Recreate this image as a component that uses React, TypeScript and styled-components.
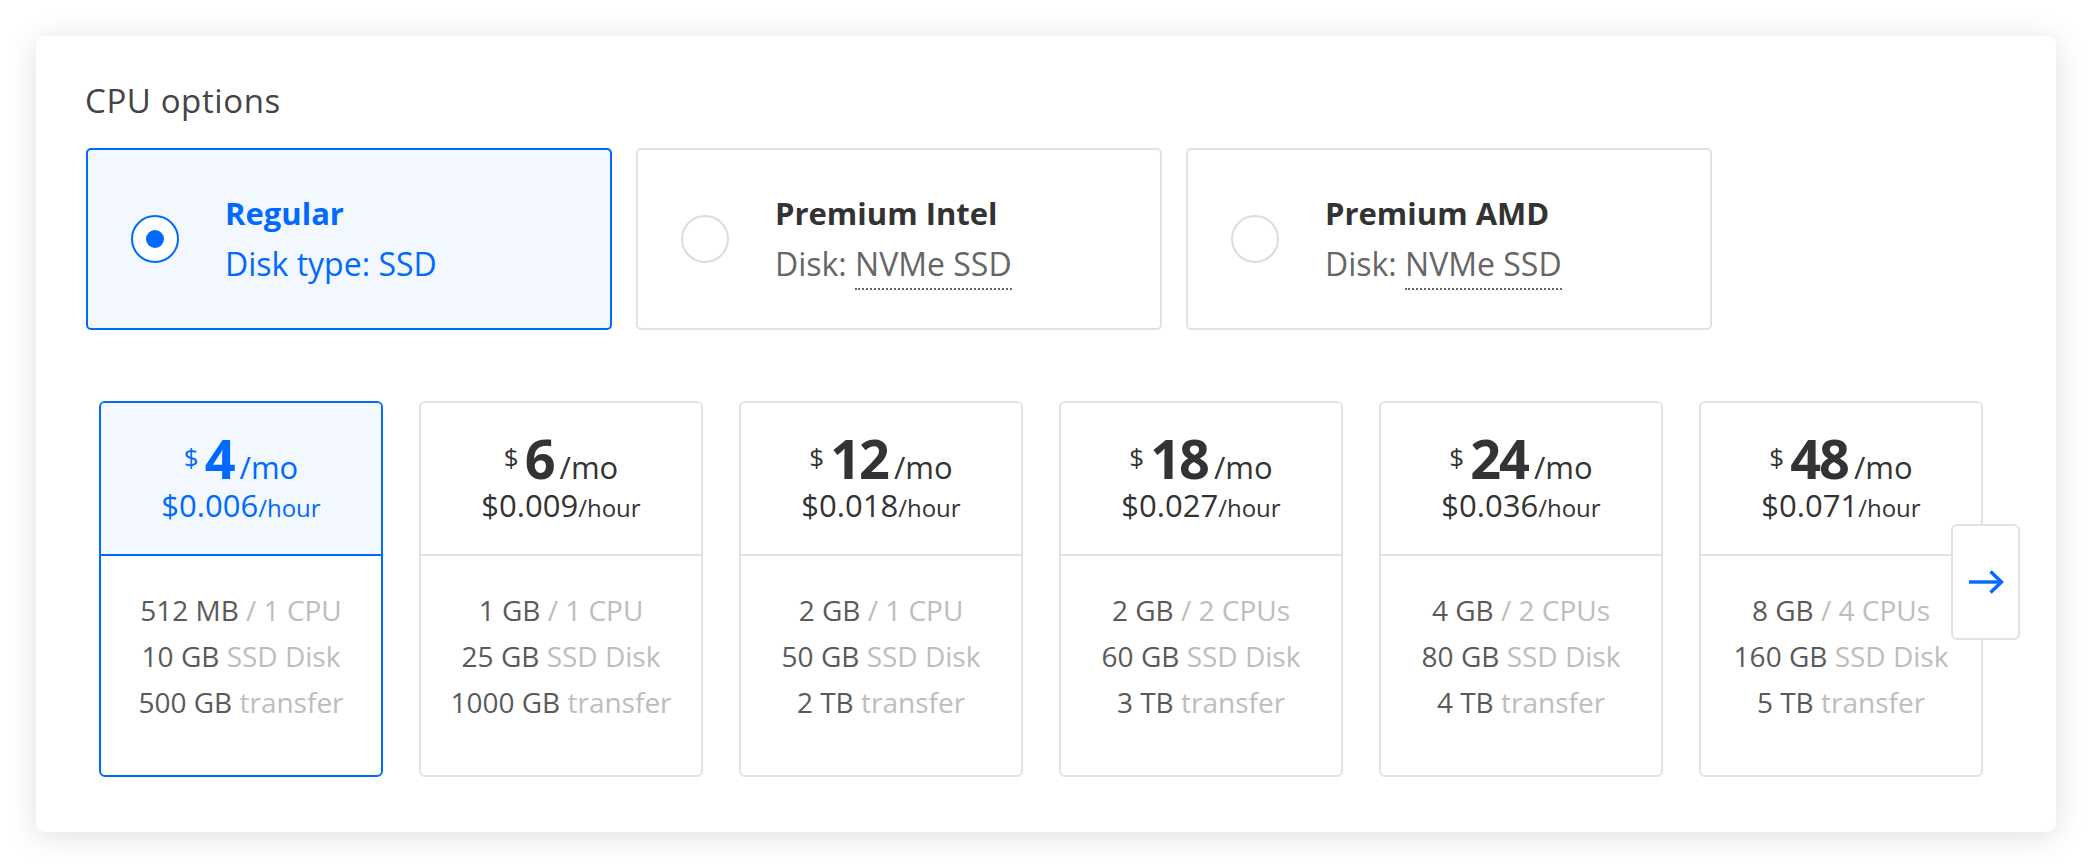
import React from "react";
import styled, { createGlobalStyle } from "styled-components";

const Global = createGlobalStyle`
  html, body { margin: 0; padding: 0; background: #ffffff; }
  body { font-family: "Open Sans", "Liberation Sans", sans-serif; color: #333; }
  * { box-sizing: border-box; }
`;

const BLUE = "#0069ff";
const SEL_BG = "#f3f8ff";
const LINE = "#e2e2e2";

const Page = styled.div`
  padding: 36px;
  width: 2092px;
`;

const Panel = styled.section`
  width: 2020px;
  height: 796px;
  background: #fff;
  border-radius: 9px;
  box-shadow: 0 4px 30px rgba(0, 0, 0, 0.13);
  padding: 45px 0 0 0;
`;

const Head = styled.div`
  padding: 0 49px;
`;

const Title = styled.h2`
  margin: 0;
  font-size: 33px;
  line-height: 40px;
  font-weight: 500;
  letter-spacing: 0.6px;
  color: #444;
`;

const OptionRow = styled.div`
  display: flex;
  gap: 24px;
  margin-top: 27px;
  margin-left: 1px;
`;

const Option = styled.div<{ $active?: boolean }>`
  width: 526px;
  height: 182px;
  border: 2px solid ${(p) => (p.$active ? BLUE : LINE)};
  background: ${(p) => (p.$active ? SEL_BG : "#fff")};
  border-radius: 5px;
  display: flex;
  align-items: center;
  padding-left: 43px;
  gap: 46px;
`;

const Radio = styled.span<{ $active?: boolean }>`
  width: 48px;
  height: 48px;
  flex: none;
  border-radius: 50%;
  border: 2px solid ${(p) => (p.$active ? BLUE : "#dcdcdc")};
  background: #fff;
  display: flex;
  align-items: center;
  justify-content: center;
  &::after {
    content: "";
    display: ${(p) => (p.$active ? "block" : "none")};
    width: 18px;
    height: 18px;
    border-radius: 50%;
    background: ${BLUE};
  }
`;

const OptionText = styled.div`
  display: flex;
  flex-direction: column;
  gap: 11px;
  margin-top: -2px;
`;

const OptionName = styled.div<{ $active?: boolean }>`
  font-size: 31px;
  line-height: 40px;
  font-weight: 700;
  color: ${(p) => (p.$active ? BLUE : "#333")};
`;

const OptionSub = styled.div<{ $active?: boolean }>`
  font-size: 32px;
  line-height: 40px;
  font-weight: 400;
  color: ${(p) => (p.$active ? BLUE : "#666")};
`;

const Dotted = styled.span`
  border-bottom: 2px dotted #666;
  padding-bottom: 3px;
`;

const PlansArea = styled.div`
  position: relative;
  margin-top: 71px;
`;

const PlansRow = styled.div`
  display: flex;
  gap: 36px;
  padding-left: 63px;
`;

const Plan = styled.div<{ $active?: boolean }>`
  width: 284px;
  flex: none;
  border: 2px solid ${(p) => (p.$active ? BLUE : LINE)};
  border-radius: 6px;
  overflow: hidden;
  background: #fff;
  display: flex;
  flex-direction: column;
`;

const PlanHead = styled.div<{ $active?: boolean }>`
  height: 153px;
  padding-top: 28px;
  background: ${(p) => (p.$active ? SEL_BG : "#fff")};
  border-bottom: 2px solid ${(p) => (p.$active ? BLUE : LINE)};
  color: ${(p) => (p.$active ? BLUE : "#333")};
  display: flex;
  flex-direction: column;
  align-items: center;
`;

const PriceRow = styled.div`
  display: flex;
  align-items: baseline;
  justify-content: center;
  line-height: 1;
`;

const Currency = styled.span`
  align-self: flex-start;
  margin-top: 13px;
  margin-right: 6px;
  font-size: 26px;
  line-height: 1;
`;

const Amount = styled.span`
  font-size: 54px;
  font-weight: 700;
  line-height: 1;
  letter-spacing: -2px;
`;

const PerMonth = styled.span`
  font-size: 31px;
  line-height: 1;
  margin-left: 6px;
`;

const HourRow = styled.div`
  display: flex;
  align-items: baseline;
  justify-content: center;
  margin-top: 5px;
  line-height: 1;
`;

const HourPrice = styled.span`
  font-size: 31px;
  line-height: 1;
`;

const HourUnit = styled.span`
  font-size: 24px;
  line-height: 1;
`;

const PlanBody = styled.div`
  padding: 31px 0 50px;
  display: flex;
  flex-direction: column;
  align-items: center;
`;

const Spec = styled.div`
  font-size: 28px;
  line-height: 46px;
  color: #5a5a5a;
  white-space: nowrap;
`;

const Muted = styled.span`
  color: #bdbdbd;
`;

const NextButton = styled.button`
  position: absolute;
  right: 36px;
  top: 123px;
  width: 69px;
  height: 116px;
  padding: 0;
  border: 2px solid ${LINE};
  border-radius: 6px;
  background: #fff;
  display: flex;
  align-items: center;
  justify-content: center;
  cursor: pointer;
`;

const options = [
  { name: "Regular", pre: "Disk type: SSD", dotted: "", active: true },
  { name: "Premium Intel", pre: "Disk: ", dotted: "NVMe SSD", active: false },
  { name: "Premium AMD", pre: "Disk: ", dotted: "NVMe SSD", active: false },
];

const plans = [
  { mo: "4", hr: "$0.006", mem: "512 MB", cpu: "1 CPU", disk: "10 GB", tr: "500 GB" },
  { mo: "6", hr: "$0.009", mem: "1 GB", cpu: "1 CPU", disk: "25 GB", tr: "1000 GB" },
  { mo: "12", hr: "$0.018", mem: "2 GB", cpu: "1 CPU", disk: "50 GB", tr: "2 TB" },
  { mo: "18", hr: "$0.027", mem: "2 GB", cpu: "2 CPUs", disk: "60 GB", tr: "3 TB" },
  { mo: "24", hr: "$0.036", mem: "4 GB", cpu: "2 CPUs", disk: "80 GB", tr: "4 TB" },
  { mo: "48", hr: "$0.071", mem: "8 GB", cpu: "4 CPUs", disk: "160 GB", tr: "5 TB" },
];

export default function App() {
  return (
    <Page>
      <Global />
      <Panel>
        <Head>
          <Title>CPU options</Title>
          <OptionRow>
            {options.map((o) => (
              <Option key={o.name} $active={o.active}>
                <Radio $active={o.active} />
                <OptionText>
                  <OptionName $active={o.active}>{o.name}</OptionName>
                  <OptionSub $active={o.active}>
                    {o.pre}
                    {o.dotted && <Dotted>{o.dotted}</Dotted>}
                  </OptionSub>
                </OptionText>
              </Option>
            ))}
          </OptionRow>
        </Head>
        <PlansArea>
          <PlansRow>
            {plans.map((p, i) => (
              <Plan key={p.mo} $active={i === 0}>
                <PlanHead $active={i === 0}>
                  <PriceRow>
                    <Currency>$</Currency>
                    <Amount>{p.mo}</Amount>
                    <PerMonth>/mo</PerMonth>
                  </PriceRow>
                  <HourRow>
                    <HourPrice>{p.hr}</HourPrice>
                    <HourUnit>/hour</HourUnit>
                  </HourRow>
                </PlanHead>
                <PlanBody>
                  <Spec>
                    {p.mem} <Muted>/ {p.cpu}</Muted>
                  </Spec>
                  <Spec>
                    {p.disk} <Muted>SSD Disk</Muted>
                  </Spec>
                  <Spec>
                    {p.tr} <Muted>transfer</Muted>
                  </Spec>
                </PlanBody>
              </Plan>
            ))}
          </PlansRow>
          <NextButton aria-label="Next">
            <svg width="36" height="24" viewBox="0 0 36 24" fill="none">
              <path d="M1 12H33" stroke={BLUE} strokeWidth="3.4" />
              <path d="M22.5 1.5L33.5 12L22.5 22.5" stroke={BLUE} strokeWidth="3.4" strokeLinejoin="miter" />
            </svg>
          </NextButton>
        </PlansArea>
      </Panel>
    </Page>
  );
}
